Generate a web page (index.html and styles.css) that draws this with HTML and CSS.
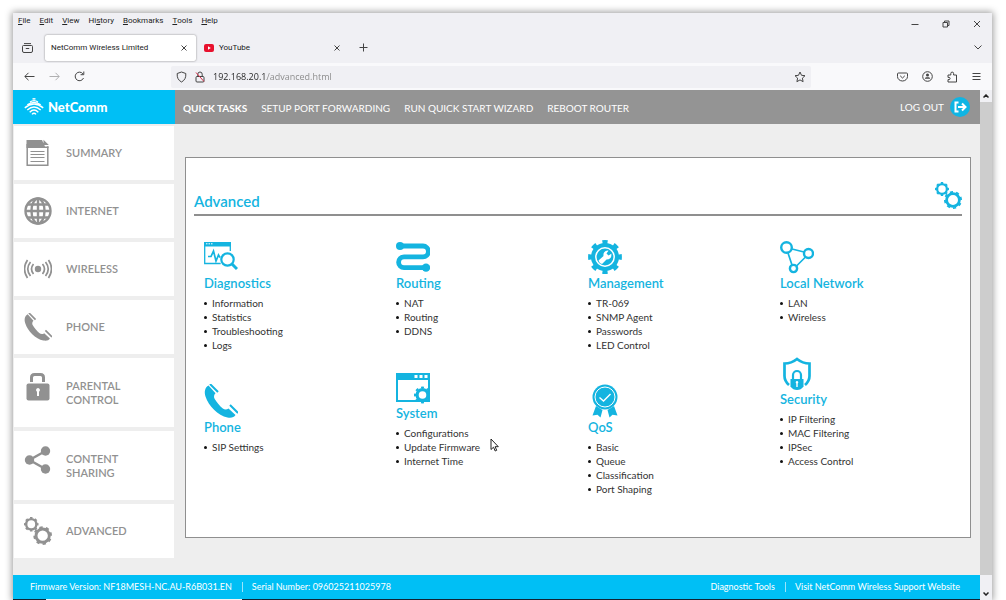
FILE: index.html
```html
<!DOCTYPE html>
<html lang="en">
<head>
<meta charset="utf-8">
<title>NetComm Wireless Limited</title>
<link rel="stylesheet" href="styles.css">
</head>
<body>
<svg class="defs" aria-hidden="true">
  <symbol id="gears" viewBox="0 0 27 27">
    <g fill="none" stroke="currentColor">
      <circle cx="7" cy="7" r="4.9" stroke-width="2.300"/>
      <circle cx="7" cy="7" r="6.2" stroke-width="1.6" pathLength="16" stroke-dasharray="1 1" stroke-dashoffset=".5"/>
      <circle cx="18" cy="18" r="6.4" stroke-width="2.800"/>
      <circle cx="18" cy="18" r="8.1" stroke-width="1.8" pathLength="16" stroke-dasharray="1 1" stroke-dashoffset="1"/>
    </g>
  </symbol>
  <symbol id="handset" viewBox="0 0 34 34">
    <path fill="currentColor" d="M4.500 1.500C1 3.500 0 7.500 1.500 12.500C4.500 22 14 31.500 23.500 33.500C27.500 34 30 33.500 31.500 31L24.500 24.500C22.500 26 20.500 25.800 18.500 24.200C15.500 21.800 12.500 18 10.700 15C9.600 13 9.800 11 11.500 9.300Z"/>
    <path fill="none" stroke="currentColor" stroke-width="2" d="M6 0L14 8M26 21L34 29"/>
  </symbol>
</svg>
<div class="window">
  <div class="titlebar">
    <nav class="menus" aria-label="Application menu">
      <button><u>F</u>ile</button><button><u>E</u>dit</button><button><u>V</u>iew</button><button>Hi<u>s</u>tory</button><button><u>B</u>ookmarks</button><button><u>T</u>ools</button><button><u>H</u>elp</button>
    </nav>
    <div class="controls">
      <button aria-label="Minimize"><svg width="8" height="8" viewBox="0 0 8 8"><path d="M.5 4.500h7"/></svg></button>
      <button aria-label="Restore"><svg width="8" height="8" viewBox="0 0 8 8"><path d="M1 2.500h4.500v4.500h-4.500zM2.500 2.500v-1.500h4.500v4.500h-1.500"/></svg></button>
      <button aria-label="Close"><svg width="8" height="8" viewBox="0 0 8 8"><path d="M1 1l6 6M7 1l-6 6"/></svg></button>
    </div>
  </div>
  <div class="tabbar">
    <button class="view" aria-label="Recent browsing"><svg width="11" height="10" viewBox="0 0 11 10"><path d="M2 .6h7M1.500 2.500h8q1 0 1 1v4.500q0 1.500-1.500 1.500h-7q-1.500 0-1.500-1.500v-4.500q0-1 1-1zM3.800 5.500h3.400"/></svg></button>
    <div class="tab active"><span>NetComm Wireless Limited</span><button aria-label="Close tab"><svg width="6" height="6" viewBox="0 0 6 6"><path d="M.5 .5l5 5M5.500 .5l-5 5"/></svg></button></div>
    <div class="tab"><svg class="yt" width="10" height="8" viewBox="0 0 10 8"><rect width="10" height="8" rx="2"/><path d="M4 2.300v3.400l2.800-1.700z"/></svg><span>YouTube</span><button aria-label="Close tab"><svg width="6" height="6" viewBox="0 0 6 6"><path d="M.5 .5l5 5M5.500 .5l-5 5"/></svg></button></div>
    <button class="new" aria-label="New tab"><svg width="9" height="9" viewBox="0 0 9 9"><path d="M4.500 .5v8M.5 4.500h8"/></svg></button>
    <button class="more" aria-label="List all tabs"><svg width="8" height="5" viewBox="0 0 8 5"><path d="M.5 .5l3.500 3.500l3.500-3.500"/></svg></button>
  </div>
  <div class="toolbar">
    <div class="history">
      <button aria-label="Back"><svg width="11" height="9" viewBox="0 0 11 9"><path d="M10.500 4.500h-9.500M4.500 .8l-3.700 3.700l3.700 3.700"/></svg></button>
      <button class="off" aria-label="Forward"><svg width="11" height="9" viewBox="0 0 11 9"><path d="M.5 4.500h9.500M6.500 .8l3.700 3.700l-3.700 3.700"/></svg></button>
      <button aria-label="Reload"><svg width="11" height="11" viewBox="0 0 11 11"><path d="M9.500 7a4.300 4.300 0 1 1-.6-4.200M9.800 .5v3.200h-3.200"/></svg></button>
    </div>
    <div class="url">
      <svg width="11" height="12" viewBox="0 0 11 12"><path d="M5.500 1l4.300 1.500c.3 4-1 6.800-4.300 8.500c-3.300-1.700-4.600-4.500-4.300-8.500z"/></svg>
      <svg width="10" height="12" viewBox="0 0 10 12"><path d="M2 5.500h6q1 0 1 1v3.500q0 1-1 1h-6q-1 0-1-1v-3.500q0-1 1-1zM2.800 5.500v-2.300a2.200 2.200 0 0 1 4.400 0v2.300"/><path class="slash" d="M1 1.500l8 9"/></svg>
      <input aria-label="Address" value="192.168.20.1/advanced.html">
      <button aria-label="Bookmark this page"><svg width="12" height="12" viewBox="0 0 12 12"><path d="M6 1l1.500 3.300l3.500 .4l-2.600 2.400l.7 3.600l-3.100-1.800l-3.100 1.800l.7-3.600l-2.600-2.400l3.500-.4z"/></svg></button>
    </div>
    <div class="tools">
      <button aria-label="Save to Pocket"><svg width="11" height="10" viewBox="0 0 11 10"><path d="M1.500 1h8q1 0 1 1v2.500a5 4.500 0 0 1-10 0v-2.500q0-1 1-1zM3.200 3.800l2.300 2.200l2.300-2.200"/></svg></button>
      <button aria-label="Account"><svg width="11" height="11" viewBox="0 0 11 11"><circle cx="5.500" cy="5.500" r="4.800"/><circle class="dot" cx="5.500" cy="4" r="1.500"/><path class="dot" d="M2.800 7.800q0-1.600 1.500-1.600h2.400q1.500 0 1.500 1.600z"/></svg></button>
      <button aria-label="Extensions"><svg width="11" height="12" viewBox="0 0 11 12"><path d="M1 4h2.800v-1.500a1.400 1.400 0 0 1 2.800 0v1.500h2.900v7h-8.500v-2.400h1a1.100 1.100 0 0 0 0-2.200h-1z"/></svg></button>
      <button aria-label="Menu"><svg width="9" height="9" viewBox="0 0 9 9"><path d="M.5 1.500h8M.5 4.500h8M.5 7.500h8"/></svg></button>
    </div>
  </div>
  <div class="viewport">
    <div class="page">
      <header class="header">
        <a class="brand" href="#"><svg width="20" height="18" viewBox="0 0 20 18"><path d="M8.500 1.200Q10 .4 11.500 1.200M6 4Q10 1.200 14 4M3.300 6.900Q10 1.800 16.700 6.900M.8 9.900Q10 2.200 19.200 9.900M3.300 12Q10 6 16.700 12M5.700 14.200Q10 10 14.300 14.200M8 16.400Q10 14.200 12 16.400"/></svg>NetComm</a>
        <nav class="quick">
          <strong>QUICK TASKS</strong><a href="#">SETUP PORT FORWARDING</a><a href="#">RUN QUICK START WIZARD</a><a href="#">REBOOT ROUTER</a>
        </nav>
        <a class="logout" href="#">LOG OUT<svg width="20" height="20" viewBox="0 0 20 20"><circle cx="10" cy="10" r="10" fill="#0fb5e4"/><path d="M8.500 5.500h-3v9h3M8 10h7M12 6.500l3.500 3.500l-3.500 3.500" fill="none" stroke="#fff" stroke-width="2"/></svg></a>
      </header>
      <div class="content">
        <nav class="side">
          <a href="#"><svg width="28" height="28" viewBox="0 0 28 28"><path fill="currentColor" d="M2.500 1h15.500l3 6.500h3.500v1.500h-22zM19.500 .8l5.300 5.300h-5.300z"/><path fill="none" stroke="currentColor" stroke-width="1.500" d="M3.200 5v21.300h20.600v-19"/><path stroke="currentColor" d="M6.500 12.500h14M6.500 15.500h14M6.500 18.500h14M6.500 22.500h14"/></svg><span>SUMMARY</span></a>
          <a href="#"><svg width="28" height="28" viewBox="0 0 28 28"><g fill="none" stroke="currentColor" stroke-width="2.400"><circle cx="14" cy="14" r="12.500"/><ellipse cx="14" cy="14" rx="6.500" ry="12.500"/><path d="M14 1.500v25M1.500 14h25M3.500 7.500h21M3.500 20.500h21"/></g></svg><span>INTERNET</span></a>
          <a href="#"><svg width="28" height="28" viewBox="0 0 28 28"><circle cx="14" cy="14" r="3.200" fill="currentColor"/><g fill="none" stroke="currentColor" stroke-width="1.700"><path d="M9.500 9q-4 5 0 10M18.500 9q4 5 0 10M6.500 7q-5.500 7 0 14M21.500 7q5.500 7 0 14M3.500 5q-6 9 0 18M24.500 5q6 9 0 18"/></g></svg><span>WIRELESS</span></a>
          <a href="#"><svg width="28" height="28"><use href="#handset"/></svg><span>PHONE</span></a>
          <a class="tall" href="#"><svg width="28" height="28" viewBox="0 0 28 28"><path fill="none" stroke="currentColor" stroke-width="3" d="M7.500 9v-4.500q0-3 3-3h6q3 0 3 3v4.500"/><rect x="2.500" y="10.500" width="23" height="17" rx="2" fill="currentColor"/><path fill="#fff" d="M14 15a2 2 0 0 1 1 3.700v4.300h-2v-4.300a2 2 0 0 1 1-3.700z"/></svg><span>PARENTAL CONTROL</span></a>
          <a class="tall" href="#"><svg width="28" height="28" viewBox="0 0 28 28"><path stroke="currentColor" stroke-width="2.500" fill="none" d="M21.500 5l-16 9l16 9"/><g fill="currentColor"><circle cx="21.500" cy="5" r="4.700"/><circle cx="5.500" cy="14" r="4.700"/><circle cx="21.500" cy="23" r="4.700"/></g></svg><span>CONTENT SHARING</span></a>
          <a href="#"><svg width="28" height="28"><use href="#gears"/></svg><span>ADVANCED</span></a>
        </nav>
        <main class="panel">
          <div class="title"><h1>Advanced</h1><svg width="27" height="27"><use href="#gears"/></svg></div>
          <div class="columns">
            <div class="column">
              <section>
                <svg width="34" height="34" viewBox="0 0 34 34"><path fill="currentColor" d="M0 2h27v4.500h-27z"/><path fill="none" stroke="currentColor" stroke-width="1.300" d="M.7 6v17.500h16M26.300 6v5"/><path fill="none" stroke="currentColor" stroke-width="1.700" d="M4 16.500h3l2.500-5.500l2.500 10l2.500-6l1.500 2.500"/><circle cx="23.500" cy="19.500" r="6.200" fill="none" stroke="currentColor" stroke-width="2.200"/><path stroke="currentColor" stroke-width="3" d="M28 24l5 5"/><path stroke="#fff" stroke-dasharray="1.500 1" d="M2 3.800h7"/></svg>
                <h2>Diagnostics</h2>
                <ul><li><a href="#">Information</a></li><li><a href="#">Statistics</a></li><li><a href="#">Troubleshooting</a></li><li><a href="#">Logs</a></li></ul>
              </section>
              <section>
                <svg width="34" height="34"><use href="#handset"/></svg>
                <h2>Phone</h2>
                <ul><li><a href="#">SIP Settings</a></li></ul>
              </section>
            </div>
            <div class="column">
              <section>
                <svg width="34" height="34" viewBox="0 0 34 34"><path fill="none" stroke="currentColor" stroke-width="4.800" d="M4 6h23a5.400 5.400 0 0 1 0 10.800h-19a5.400 5.400 0 0 0 0 10.800h21"/><circle cx="4" cy="6" r="4" fill="currentColor"/><circle cx="30" cy="27.600" r="4.200" fill="currentColor"/></svg>
                <h2>Routing</h2>
                <ul><li><a href="#">NAT</a></li><li><a href="#">Routing</a></li><li><a href="#">DDNS</a></li></ul>
              </section>
              <section>
                <svg width="34" height="34" viewBox="0 0 34 34"><path fill="currentColor" d="M0 3h34v7h-34z"/><path fill="none" stroke="currentColor" stroke-width="2" d="M1 9v22h32v-22"/><path fill="#fff" d="M18.500 5h3v3h-3zM23.500 5h3v3h-3zM28.500 5h3v3h-3z"/><circle cx="26.500" cy="25" r="5.400" fill="#fff" stroke="currentColor" stroke-width="3.200"/><circle cx="26.500" cy="25" r="7.500" fill="none" stroke="currentColor" stroke-width="2" pathLength="16" stroke-dasharray="1 1" stroke-dashoffset=".5"/></svg>
                <h2>System</h2>
                <ul><li><a href="#">Configurations</a></li><li><a href="#">Update Firmware</a></li><li><a href="#">Internet Time</a></li></ul>
              </section>
            </div>
            <div class="column">
              <section>
                <svg width="34" height="34" viewBox="0 0 34 34"><circle cx="17" cy="17" r="14" fill="currentColor"/><circle cx="17" cy="17" r="15" fill="none" stroke="currentColor" stroke-width="3.800" pathLength="16" stroke-dasharray=".9 1.100" stroke-dashoffset=".45"/><circle cx="17" cy="17" r="9.200" fill="none" stroke="#fff" stroke-width="1.500"/><path fill="#fff" d="M10.500 20.500l5-4.500q-.7-4.500 4-5.500l1 .3l-2 2.700l2 2l2.800-1.800q.8 5.800-4.800 5.800l-4.500 4.500q-2.800-.8-3.500-3.500z"/></svg>
                <h2>Management</h2>
                <ul><li><a href="#">TR-069</a></li><li><a href="#">SNMP Agent</a></li><li><a href="#">Passwords</a></li><li><a href="#">LED Control</a></li></ul>
              </section>
              <section>
                <svg width="34" height="34" viewBox="0 0 34 34"><g fill="currentColor"><circle cx="17" cy="13" r="12.500"/><path d="M8 22l6.500 4l-2 7.500l-3-2.800l-5 .8zM26 22l-6.500 4l2 7.500l3-2.800l5 .8z"/></g><circle cx="17" cy="13" r="10" fill="none" stroke="#fff" stroke-width="1"/><path fill="none" stroke="#fff" stroke-width="1.400" d="M11.500 13.500l4 3.500l7-7"/></svg>
                <h2>QoS</h2>
                <ul><li><a href="#">Basic</a></li><li><a href="#">Queue</a></li><li><a href="#">Classification</a></li><li><a href="#">Port Shaping</a></li></ul>
              </section>
            </div>
            <div class="column">
              <section>
                <svg width="34" height="34" viewBox="0 0 34 34"><g fill="none" stroke="currentColor" stroke-width="1.700"><path d="M12 9l12 3M8 13l4 12M25.500 17l-9 9"/><g stroke-width="2.400"><circle cx="6.500" cy="7.500" r="5.300"/><circle cx="28.500" cy="13.500" r="4.500"/><circle cx="13.500" cy="28.500" r="3.600"/></g></g></svg>
                <h2>Local Network</h2>
                <ul><li><a href="#">LAN</a></li><li><a href="#">Wireless</a></li></ul>
              </section>
              <section>
                <svg width="34" height="34" viewBox="0 0 34 34"><path fill="none" stroke="currentColor" stroke-width="2.700" d="M9 29q-4.500-4-4.500-9v-12.500q7 0 12.500-4.500q5.500 4.500 12.500 4.500v12.500q0 5-4.500 9"/><path fill="none" stroke="currentColor" stroke-width="2.200" d="M13 24v-5a4 4 0 0 1 8 0v5"/><path fill="currentColor" d="M10.500 23h13v7.500q-2.500 3.500-6.500 3.500t-6.500-3.500z"/><path fill="#fff" d="M17 25a1.300 1.300 0 0 1 .7 2.400v3.600h-1.400v-3.600a1.300 1.300 0 0 1 .7-2.400z"/></svg>
                <h2>Security</h2>
                <ul><li><a href="#">IP Filtering</a></li><li><a href="#">MAC Filtering</a></li><li><a href="#">IPSec</a></li><li><a href="#">Access Control</a></li></ul>
              </section>
            </div>
          </div>
          <svg class="pointer" width="9" height="14" viewBox="0 0 9 14"><path fill="#fff" stroke="#222" d="M1 1v10.500l2.500-2.300l1.700 3.800l1.500-.7l-1.600-3.600h3.200z"/></svg>
        </main>
      </div>
      <footer class="footer">
        <span>Firmware Version: NF18MESH-NC.AU-R6B031.EN</span><span>Serial Number: 096025211025978</span>
        <a class="first" href="#">Diagnostic Tools</a><a href="#">Visit NetComm Wireless Support Website</a>
      </footer>
    </div>
    <div class="scroll">
      <button aria-label="Scroll up"><svg width="6" height="4" viewBox="0 0 6 4"><path d="M.5 3.500l2.500-2.500l2.500 2.500"/></svg></button>
      <div class="thumb"></div>
      <button class="down" aria-label="Scroll down"><svg width="6" height="4" viewBox="0 0 6 4"><path d="M.5 .5l2.500 2.500l2.500-2.500"/></svg></button>
    </div>
  </div>
  <div class="edge"></div>
</div>
</body>
</html>
```
FILE: styles.css
```css
* { box-sizing: border-box; }
body { margin: 0; background: #fff; font-family: "Lato", sans-serif; }
button { border: 0; padding: 0; background: none; font: inherit; color: inherit; display: flex; align-items: center; justify-content: center; }
button u { text-underline-offset: 1px; }
a { color: inherit; text-decoration: none; }
svg { flex: none; display: block; }
.defs { position: absolute; width: 0; height: 0; }

.window { display: flex; flex-direction: column; min-height: 587px; min-height: calc(100vh - 13px); margin: 13px 14px 0 13px; background: #f0f0f4; box-shadow: 0 0 7px 1px rgba(0, 0, 0, .4); font: 8px/12px "Roboto", sans-serif; color: #222; }
.titlebar svg, .tabbar svg, .toolbar svg, .scroll svg { fill: none; stroke: #444; }

.titlebar { display: flex; justify-content: space-between; height: 21px; }
.menus { display: flex; gap: 9px; height: 15px; padding-left: 5px; }
.controls { display: flex; gap: 23px; padding-right: 11px; }

.tabbar { display: flex; align-items: center; height: 29px; padding: 0 10px 2px 0; }
.view { width: 28px; height: 28px; }
.tab { display: flex; align-items: center; gap: 5px; width: 153px; height: 26px; padding: 0 9px 0 8px; }
.tab button { margin-left: auto; }
.tab.active { width: 151px; margin-left: 4px; padding-left: 6px; background: #fff; border-radius: 2px; box-shadow: 0 0 2px rgba(0, 0, 0, .5); }
.tabbar .yt { fill: #e8112d; stroke: none; }
.tabbar .yt path { fill: #fff; }
.new { margin-left: 10px; }
.more { margin-left: auto; }

.toolbar { display: flex; align-items: center; height: 27px; background: #f9f9fb; }
.history { display: flex; gap: 14px; width: 158px; padding-left: 11px; align-items: center; }
.off { opacity: .4; }
.url { display: flex; align-items: center; gap: 8px; flex: 1; max-width: 640px; height: 22px; padding: 0 5px; background: #f0f0f4; border-radius: 2px; }
.toolbar .slash { stroke: #d8304a; }
.url input { flex: 1; min-width: 0; border: 0; padding: 0; outline: 0; font: 9px/14px "Open Sans", sans-serif; color: transparent; background: linear-gradient(90deg, #222 54px, #888 54px); background-clip: text; -webkit-background-clip: text; }
.tools { display: flex; align-items: center; gap: 14px; margin-left: auto; padding-right: 11px; }
.toolbar .dot { fill: #444; stroke: none; }

.viewport { display: flex; flex: 1; }
.page { flex: 1; display: flex; flex-direction: column; background: #eee; font-family: "Lato", sans-serif; }
.scroll { width: 12px; display: flex; flex-direction: column; }
.scroll button { height: 12px; }
.scroll svg { stroke: #222; stroke-width: 1.5; }
.thumb { flex: 1; background: #cdcdcd; }
.scroll .down { height: 24px; align-items: flex-end; padding-bottom: 3px; }

.header { display: flex; align-items: center; height: 34px; background: #949494; color: #fff; font-size: 10px; }
.brand { display: flex; align-items: center; gap: 4px; width: 162px; height: 34px; padding-left: 11px; background: #00bff5; font-size: 13px; font-weight: 900; }
.brand svg { fill: none; stroke: #fff; stroke-width: 1.4; }
.quick { display: flex; gap: 14px; padding: 2px 0 0 8px; }
.logout { display: flex; align-items: center; gap: 6px; margin-left: auto; padding-right: 10px; }

.content { display: flex; flex: 1; align-items: flex-start; }
.side { display: flex; flex-direction: column; gap: 4px; width: 162px; padding-top: 2px; }
.side a { display: flex; align-items: center; gap: 14px; height: 54px; margin: 0 1px; padding: 0 38px 0 10px; background: #fff; color: #919191; font-size: 11px; line-height: 14px; font-weight: 600; }
.side .tall { height: 69px; }
.side .tall svg { margin-bottom: 12px; }

.panel { position: relative; flex: 1; margin: 33px 9px 0 10px; padding: 24px 8px 41px; background: #fff; border: 1px solid #8f8f8f; color: #14b4e0; }
.title { display: flex; justify-content: space-between; height: 34px; border-bottom: 2px solid #8f8f8f; }
.title h1 { margin: 9px 0 0; font-size: 15px; line-height: 20px; font-weight: 600; }
.columns { display: grid; grid-template-columns: repeat(4, 1fr); padding-top: 24px; }
.column { display: flex; flex-direction: column; gap: 32px; padding-left: 10px; }
h2 { margin: 0 0 4px; font-size: 13px; line-height: 18px; font-weight: 600; }
ul { margin: 0; padding: 0; list-style: none; color: #333; font-size: 10px; line-height: 14px; }
li { display: flex; align-items: center; gap: 5px; }
li::before { content: ""; width: 3px; height: 3px; border-radius: 50%; background: #111; }
.pointer { position: absolute; left: 304px; top: 280px; }

.footer { display: flex; align-items: center; height: 24px; padding: 0 20px 0 17px; background: #00bff5; color: #fff; font-size: 9px; line-height: 10px; }
.footer span + span, .footer a + a { margin-left: 10px; padding-left: 9px; border-left: 1px solid #9be5fb; }
.footer .first { margin-left: auto; }
.edge { height: 1px; margin-right: 12px; background: linear-gradient(90deg, #123 3.4%, #f4f4f4 3.4% 23.7%, #123 23.7%); }
```
